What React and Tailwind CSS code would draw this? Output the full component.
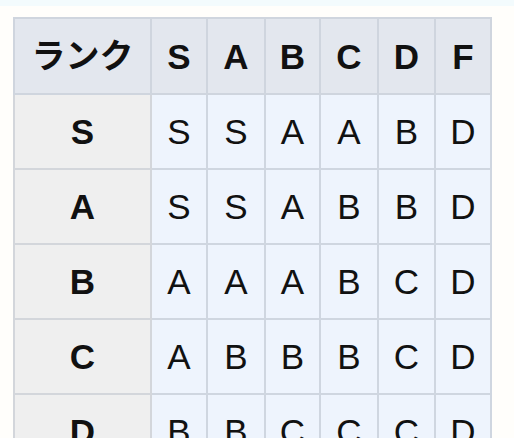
import React from "react";

const cols = ["S", "A", "B", "C", "D", "F"];

const rows = [
  ["S", ["S", "S", "A", "A", "B", "D"]],
  ["A", ["S", "S", "A", "B", "B", "D"]],
  ["B", ["A", "A", "A", "B", "C", "D"]],
  ["C", ["A", "B", "B", "B", "C", "D"]],
  ["D", ["B", "B", "C", "C", "C", "D"]],
];

export default function App() {
  return (
    <div
      className="w-[514px] h-[438px] overflow-hidden bg-[#fffefb]"
      style={{ fontFamily: '"Liberation Sans", "Noto Sans CJK JP", sans-serif' }}
    >
      <div className="h-[6px] bg-[#f3fbfd]" />
      <div className="pl-[13px] pt-[11px]">
        <table className="table-fixed border-collapse text-[#111] text-[35px] leading-none">
          <colgroup>
            <col className="w-[137px]" />
            <col className="w-[56px]" />
            <col className="w-[58px]" />
            <col className="w-[55px]" />
            <col className="w-[58px]" />
            <col className="w-[57px]" />
            <col className="w-[56px]" />
          </colgroup>
          <thead>
            <tr className="h-[76px] bg-[#e3e7ee]">
              <th className="border-2 border-[#cfd5de] font-bold text-[34px]">ランク</th>
              {cols.map((c) => (
                <th key={c} className="border-2 border-[#cfd5de] font-bold">
                  {c}
                </th>
              ))}
            </tr>
          </thead>
          <tbody>
            {rows.map(([head, vals]) => (
              <tr key={head} className="h-[75px]">
                <th className="border-2 border-[#d3d6db] bg-[#efefef] font-bold">{head}</th>
                {vals.map((v, i) => (
                  <td
                    key={i}
                    className="border-2 border-[#cfd6e0] bg-[#eef4fd] text-center font-normal"
                  >
                    {v}
                  </td>
                ))}
              </tr>
            ))}
          </tbody>
        </table>
      </div>
    </div>
  );
}
